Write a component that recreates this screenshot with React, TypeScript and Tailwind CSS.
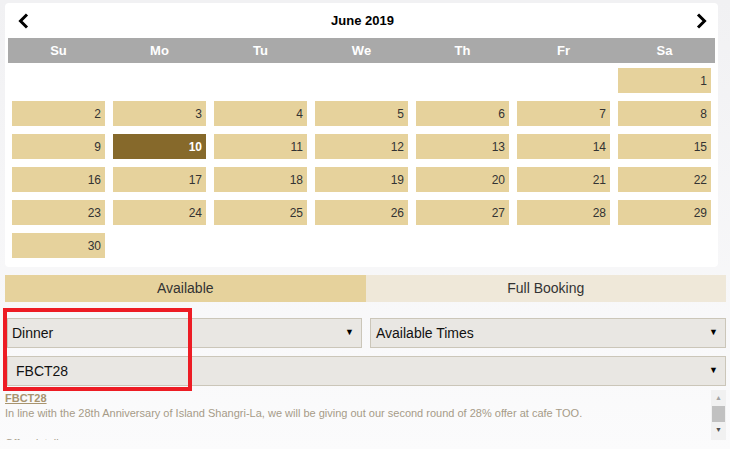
import React from "react";

const days = ["Su", "Mo", "Tu", "We", "Th", "Fr", "Sa"];

// June 2019 starts on a Saturday
const cells: (number | null)[] = [
  null, null, null, null, null, null, 1,
  2, 3, 4, 5, 6, 7, 8,
  9, 10, 11, 12, 13, 14, 15,
  16, 17, 18, 19, 20, 21, 22,
  23, 24, 25, 26, 27, 28, 29,
  30, null, null, null, null, null, null,
];

function Chevron({ dir }: { dir: "left" | "right" }) {
  return (
    <svg width="11" height="16" viewBox="0 0 11 16" className="block">
      <polyline
        points={dir === "left" ? "9,1.5 2.5,8 9,14.5" : "2,1.5 8.5,8 2,14.5"}
        fill="none"
        stroke="#000"
        strokeWidth="3"
      />
    </svg>
  );
}

function Select({ label, className, textPad }: { label: string; className: string; textPad: string }) {
  return (
    <div className={`h-[30px] flex items-center justify-between bg-[#e9e7e3] border border-[#cbc6b9] text-[14px] text-[#111] ${className}`}>
      <span className={textPad}>{label}</span>
      <span className="text-[9px] pr-[7px] text-black">▼</span>
    </div>
  );
}

export default function App() {
  return (
    <div className="relative w-[730px] h-[449px] overflow-hidden bg-gradient-to-b from-[#f1f1f3] to-[#fbfbfc] font-['Liberation_Sans',Arial,sans-serif]">
      <div className="pt-[3px] pl-[5px] pr-[12px]">
        <div className="bg-white rounded-[4px] px-[3px] pb-[5px]">
          <div className="h-[35px] flex items-center justify-between pl-[10px] pr-[8px]">
            <Chevron dir="left" />
            <div className="text-[13px] font-bold text-black">June 2019</div>
            <Chevron dir="right" />
          </div>
          <div className="grid grid-cols-7 h-[25px] bg-[#a9a9a9] items-center">
            {days.map((d) => (
              <div key={d} className="text-center text-[13px] font-bold text-white">{d}</div>
            ))}
          </div>
          <div className="grid grid-cols-7 gap-y-[8px] pt-[5px] pb-[4px]">
            {cells.map((n, i) =>
              n === null ? (
                <div key={i} className="h-[25px]" />
              ) : (
                <div
                  key={i}
                  className={`mx-[4px] h-[25px] flex items-center justify-end pr-[4px] text-[12px] ${
                    n === 10 ? "bg-[#86692b] text-white font-bold" : "bg-[#e6d29c] text-[#333]"
                  }`}
                >
                  {n}
                </div>
              )
            )}
          </div>
        </div>
      </div>

      <div className="mt-[8px] mx-[5px] w-[721px] flex h-[27px] text-[14px] text-[#333]">
        <div className="flex-1 flex items-center justify-center bg-[#e6d29c]">Available</div>
        <div className="flex-1 flex items-center justify-center bg-[#efe8d9]">Full Booking</div>
      </div>

      <div className="mt-[16px] pl-[7px] pr-[4px] flex gap-[8px]">
        <Select label="Dinner" className="w-[355px]" textPad="pl-[4px]" />
        <Select label="Available Times" className="flex-1" textPad="pl-[5px]" />
      </div>
      <div className="mt-[8px] pl-[7px] pr-[4px]">
        <Select label="FBCT28" className="w-full" textPad="pl-[8px]" />
      </div>

      <div className="mt-[4px] ml-[5px] w-[721px] h-[50px] flex overflow-hidden">
        <div className="flex-1 text-[11px] leading-[15px] text-[#a69b88] pt-[1px]">
          <div className="font-bold underline text-[#a8946f]">FBCT28</div>
          <div>In line with the 28th Anniversary of Island Shangri-La, we will be giving out our second round of 28% offer at cafe TOO.</div>
          <div>&nbsp;</div>
          <div>Offer details:</div>
        </div>
        <div className="w-[15px] h-[50px] bg-[#f1f1f1] flex flex-col items-center">
          <div className="h-[16px] flex items-center text-[7px] text-[#a3a3a3]">▲</div>
          <div className="w-[13px] h-[16px] bg-[#c1c1c1]" />
          <div className="h-[16px] flex items-center text-[7px] text-[#505050]">▼</div>
        </div>
      </div>

      <div className="absolute left-[3px] top-[308px] w-[189px] h-[83px] border-[4px] border-[#ed1c24]" />
    </div>
  );
}
